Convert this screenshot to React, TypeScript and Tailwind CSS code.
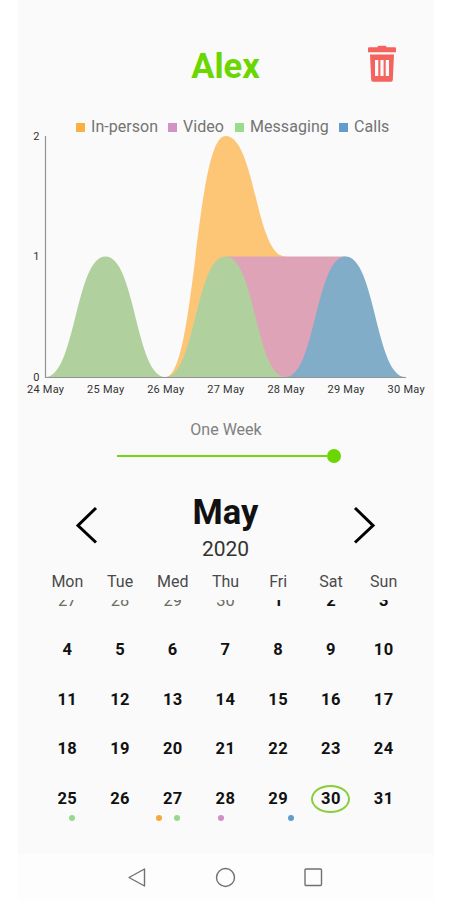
import clsx from "clsx";

const legend = [
  { label: "In-person", color: "bg-[#fbb040]", width: "w-[92px]" },
  { label: "Video", color: "bg-[#d093c4]", width: "w-[67px]" },
  { label: "Messaging", color: "bg-[#98dc8c]", width: "w-[104px]" },
  { label: "Calls", color: "bg-[#619ccd]", width: "w-[52px]" },
];

const weekDays = ["Mon", "Tue", "Med", "Thu", "Fri", "Sat", "Sun"];

const weeks = [
  [4, 5, 6, 7, 8, 9, 10],
  [11, 12, 13, 14, 15, 16, 17],
  [18, 19, 20, 21, 22, 23, 24],
  [25, 26, 27, 28, 29, 30, 31],
];

const firstWeek = [27, 28, 29, 30, 1, 2, 3];

const days = ["24 May", "25 May", "26 May", "27 May", "28 May", "29 May", "30 May"];

// Chart geometry, one day is 60px wide and one contact 120.5px high
const LEFT = 27.5;
const BASE = 245;
const STEP = 60;
const UNIT = 120.5;

function areaPath(start: number, values: number[]) {
  const x = (i: number) => LEFT + (start + i) * STEP;
  const y = (v: number) => BASE - v * UNIT;
  let d = `M${x(0)} ${y(values[0])}`;
  for (let i = 1; i < values.length; i++) {
    const mid = (x(i) + x(i - 1)) / 2;
    d += ` C${mid} ${y(values[i - 1])} ${mid} ${y(values[i])} ${x(i)} ${y(values[i])}`;
  }
  return `${d} L${x(values.length - 1)} ${BASE} L${x(0)} ${BASE} Z`;
}

function Header() {
  return (
    <div className="grid h-[116px] grid-cols-[1fr_auto_1fr] pt-[40px]">
      <div />
      <h1 className="ml-[-1px] mt-[2px] text-[34.5px] font-bold leading-[48px] text-[#6bd600]">Alex</h1>
      <button className="mr-[38px] mt-[5px] h-[38px] w-[28px] justify-self-end">
        <svg width="28" height="38" viewBox="0 0 28 38" fill="#f4635e">
          <path d="M9.5 2.2 Q9.5 0.8 11 0.8 H17 Q18.5 0.8 18.5 2.2 H27 Q28 2.2 28 3.2 V7.2 H0 V3.2 Q0 2.2 1 2.2 Z" />
          <path
            fillRule="evenodd"
            d="M2 9.5 H26 L24.8 35 Q24.7 36.8 23 36.8 H5 Q3.3 36.8 3.2 35 Z M7 15 V31 H10.3 V15 Z M12.4 15 V31 H15.6 V15 Z M17.7 15 V31 H21 V15 Z"
          />
        </svg>
      </button>
    </div>
  );
}

function Chart() {
  return (
    <div className="relative h-[292px]">
      <svg width="416" height="292" viewBox="0 0 416 292" className="block" transform="translate(0 16)">
        <path d={areaPath(2, [0, 2, 1])} fill="#fdc676" />
        <path d={areaPath(3, [1, 1, 1])} fill="#dfa3b7" />
        <path d={areaPath(0, [0, 1, 0, 1, 0])} fill="#b0d09e" />
        <path d={areaPath(4, [0, 1, 0])} fill="#81adc8" />
        <path d="M27.5 4 V245.5 H388" fill="none" stroke="#939393" strokeWidth="1.2" />
        <g fill="#333" fontSize="11" fontFamily="Roboto, sans-serif">
          {[0, 1, 2].map((v) => (
            <text key={v} x="21.5" y={248.5 - v * UNIT} textAnchor="end">
              {v}
            </text>
          ))}
          {days.map((day, i) => (
            <text key={day} x={LEFT + i * 60.1} y="261" textAnchor="middle" textLength="37">
              {day}
            </text>
          ))}
        </g>
      </svg>
      <div className="absolute left-[58px] top-0 flex h-[22px] items-center">
        {legend.map((item) => (
          <div key={item.label} className={clsx("flex items-center whitespace-nowrap", item.width)}>
            <span className={clsx("mr-[6px] size-[9px] shrink-0", item.color)} />
            <span className="text-[16px] leading-[22px] tracking-[0.05px] text-[#747474]">{item.label}</span>
          </div>
        ))}
      </div>
    </div>
  );
}

function RangeSlider() {
  return (
    <div className="flex h-[68px] flex-col items-center pt-[11px]">
      <span className="text-[16px] leading-[22px] text-[#808080]">One Week</span>
      <div className="ml-[6px] mt-[8px] flex h-[14px] w-[224px] items-center">
        <div className="h-[2px] flex-1 bg-[#72d710]" />
        <div className="size-[14px] rounded-full bg-[#6bd600]" />
      </div>
    </div>
  );
}

function MonthHeader() {
  return (
    <div className="flex h-[94px] items-start justify-between pl-[57px] pr-[58px] pt-[13px]">
      <svg width="23" height="38" viewBox="0 0 23 38" className="mt-[17px]" fill="none" stroke="#000" strokeWidth="3">
        <path d="M21 2 L3 19.5 L21 36.5" />
      </svg>
      <div className="flex flex-col items-center text-[#111]">
        <h2 className="text-[34.5px] font-bold leading-[46px]">May</h2>
        <span className="mt-[2px] text-[21px] leading-[24px] text-[#333]">2020</span>
      </div>
      <svg width="23" height="38" viewBox="0 0 23 38" className="mt-[17px]" fill="none" stroke="#000" strokeWidth="3">
        <path d="M2 2 L20 19.5 L2 36.5" />
      </svg>
    </div>
  );
}

function Calendar() {
  return (
    <div className="ml-[23px] w-[369px] text-center">
      <div className="grid h-[29px] grid-cols-7 text-[16px] leading-[24px] text-[#4a4a4a]">
        {weekDays.map((day) => (
          <span key={day}>{day}</span>
        ))}
      </div>
      {/* first week is half scrolled under the week day names */}
      <div className="mt-px h-[32.3px] overflow-hidden">
        <div className="mt-[-10px] grid grid-cols-7 text-[16.5px] leading-[22px]">
          {firstWeek.map((day) => (
            <span key={day} className={day > 20 ? "text-[#6c6c60]" : "font-bold text-[#111]"}>
              {day}
            </span>
          ))}
        </div>
      </div>
      {weeks.map((week) => (
        <div key={week[0]} className="grid h-[49.7px] grid-cols-7 pt-[4px]">
          {week.map((day) => (
            <div key={day} className="flex flex-col items-center">
              <span
                className={clsx(
                  "flex h-[28px] w-[39px] shrink-0 items-center justify-center text-[16.5px] font-bold tracking-[0.4px] text-[#111]",
                  day === 30 && "rounded-[50%] border-2 border-[#86cf38]"
                )}
              >
                {day}
              </span>
              {day === 25 && <Dots className="ml-[9px]" colors={["bg-[#98d98d]"]} />}
              {day === 27 && <Dots className="ml-[-9px]" colors={["bg-[#f5a93a]", "bg-[#98d98d]"]} />}
              {day === 28 && <Dots className="ml-[-9px]" colors={["bg-[#d08fc8]"]} />}
              {day === 29 && <Dots className="ml-[26px]" colors={["bg-[#619ccd]"]} />}
            </div>
          ))}
        </div>
      ))}
    </div>
  );
}

function Dots({ colors, className }: { colors: string[]; className: string }) {
  return (
    <div className={clsx("mt-[2px] flex gap-[12px]", className)}>
      {colors.map((color) => (
        <span key={color} className={clsx("size-[6px] rounded-full", color)} />
      ))}
    </div>
  );
}

function NavBar() {
  return (
    <div className="mt-auto flex h-[46px] items-center justify-center gap-[67px] bg-[#fdfdfd] pr-[2px]">
      <svg width="21" height="21" viewBox="0 0 21 21" fill="none" stroke="#707070" strokeWidth="1.4" strokeLinejoin="round">
        <path d="M17.5 2 V19 L2 10.5 Z" />
      </svg>
      <svg width="21" height="21" viewBox="0 0 21 21" fill="none" stroke="#707070" strokeWidth="1.4">
        <circle cx="10.5" cy="10.5" r="9" />
      </svg>
      <svg width="21" height="21" viewBox="0 0 21 21" fill="none" stroke="#707070" strokeWidth="1.4">
        <rect x="2" y="2" width="16.5" height="16.5" rx="1" />
      </svg>
    </div>
  );
}

export default function App() {
  return (
    <div className="h-[900px] w-[450px] overflow-hidden bg-white font-[Roboto,sans-serif]">
      <div className="ml-[18px] flex h-full w-[416px] flex-col bg-[#fafafa]">
        <Header />
        <Chart />
        <RangeSlider />
        <MonthHeader />
        <Calendar />
        <NavBar />
      </div>
    </div>
  );
}
